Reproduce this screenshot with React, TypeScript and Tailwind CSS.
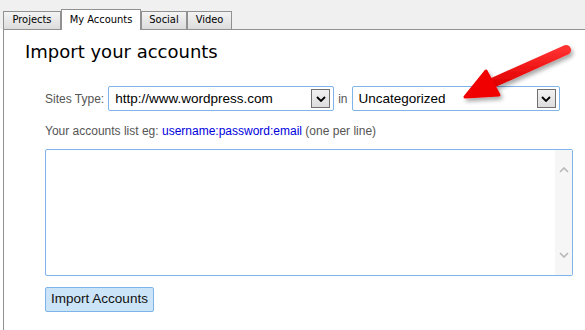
import React from "react";

function Chevron({ up = false }: { up?: boolean }) {
  return (
    <svg width="10" height="6" viewBox="0 0 10 6">
      <path d={up ? "M1 5 L5 1 L9 5" : "M1 1 L5 5 L9 1"} fill="none" stroke="#b8b8b8" strokeWidth="1.6" />
    </svg>
  );
}

function SelectBox({ text, width }: { text: string; width: string }) {
  return (
    <div className={`${width} h-[25px] border border-[#7eb4ea] bg-white flex items-center pl-[6px] pr-[3px] rounded-[2px]`}>
      <span className="flex-1 text-[13.5px] text-black leading-none">{text}</span>
      <div className="w-[19px] h-[19px] border border-[#707070] bg-gradient-to-b from-[#f2f2f2] to-[#dddddd] flex items-center justify-center">
        <svg width="10" height="6" viewBox="0 0 10 6">
          <path d="M1 1 L5 5 L9 1" fill="none" stroke="#000" strokeWidth="1.8" />
        </svg>
      </div>
    </div>
  );
}

export default function App() {
  const tabs: [string, string][] = [
    ["Projects", "w-[58px]"],
    ["My Accounts", "w-[80px]"],
    ["Social", "w-[46px]"],
    ["Video", "w-[45px]"],
  ];
  const tabFont = { fontFamily: '"DejaVu Sans Condensed", "DejaVu Sans", sans-serif' };
  return (
    <div className="relative w-[585px] h-[330px] bg-white overflow-hidden" style={{ fontFamily: '"Liberation Sans", Arial, sans-serif' }}>
      <div className="h-[29px] bg-[#f0f0f0] flex items-end pl-[3px]">
        {tabs.map(([t, w], i) =>
          i === 1 ? (
            <div key={t} className={`${w} relative z-10 -mb-px h-[21px] bg-white border border-[#919191] border-b-0 flex justify-center items-start pt-[2px] text-[11px] text-black`} style={tabFont}>
              {t}
            </div>
          ) : (
            <div key={t} className={`${w} h-[18px] border border-[#919191] border-b-0 bg-gradient-to-b from-[#f4f4f4] to-[#dcdcdc] flex justify-center items-center text-[11px] text-black`} style={tabFont}>
              {t}
            </div>
          )
        )}
      </div>
      <div className="ml-[3px] border-l border-t border-[#919191] h-[301px] pl-[21px] pt-[10px]">
        <h1 className="text-[18px] leading-[24px] text-black" style={{ fontFamily: '"DejaVu Sans", Verdana, sans-serif' }}>
          Import your accounts
        </h1>
        <div className="pl-[20px]">
          <div className="flex items-center mt-[22px] gap-[4px]">
            <span className="text-[12px] text-[#555]">Sites Type:</span>
            <SelectBox text="http://www.wordpress.com" width="w-[226px]" />
            <span className="text-[12px] text-[#555]">in</span>
            <SelectBox text="Uncategorized" width="w-[208px]" />
          </div>
          <div className="mt-[12px] text-[12px] leading-[16px] text-[#555]">
            Your accounts list eg: <span className="text-[#0000dd]">username:password:email</span> (one per line)
          </div>
          <div className="mt-[10px] w-[528px] h-[127px] border border-[#7eb4ea] rounded-[2px] flex justify-end">
            <div className="w-[17px] bg-[#f6f6f6] flex flex-col items-center justify-between py-[17px]">
              <Chevron up />
              <Chevron />
            </div>
          </div>
          <button className="mt-[11px] h-[25px] w-[109px] bg-[#cce4f7] border border-[#7eb4ea] rounded-[2px] text-[13.5px] text-[#111] flex items-center justify-center">
            Import Accounts
          </button>
        </div>
      </div>
      <svg className="absolute left-0 top-0 pointer-events-none" width="585" height="330" viewBox="0 0 585 330">
        <defs>
          <filter id="sh" x="-20%" y="-20%" width="140%" height="140%">
            <feDropShadow dx="2" dy="3" stdDeviation="2" floodColor="#000" floodOpacity="0.35" />
          </filter>
          <linearGradient id="rg" x1="0" y1="0" x2="0" y2="1">
            <stop offset="0" stopColor="#ff3030" />
            <stop offset="1" stopColor="#e00000" />
          </linearGradient>
        </defs>
        <g filter="url(#sh)">
          <path d="M566 50 L490 84" stroke="url(#rg)" strokeWidth="10" strokeLinecap="round" />
          <path d="M465 97 L486 71 L499 95 Z" fill="#f00000" stroke="#f00000" strokeWidth="3" strokeLinejoin="round" />
        </g>
      </svg>
    </div>
  );
}
